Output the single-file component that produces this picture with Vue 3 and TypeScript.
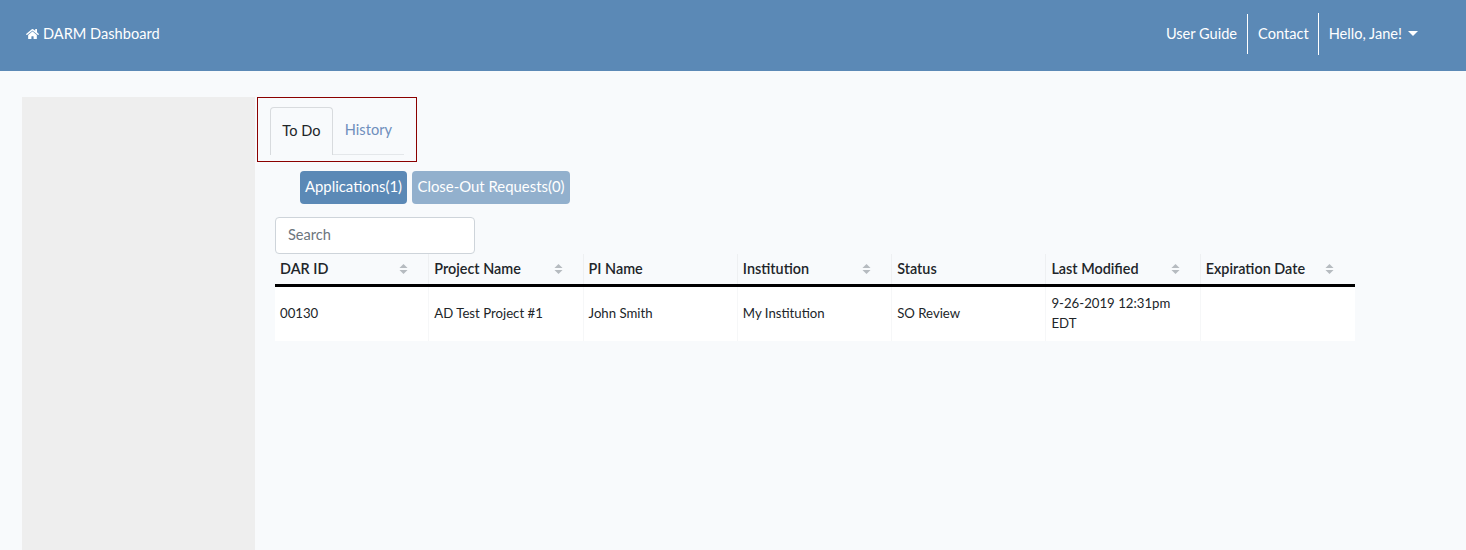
<script setup lang="ts">
const columns = ['DAR ID', 'Project Name', 'PI Name', 'Institution', 'Status', 'Last Modified', 'Expiration Date']
const sortable = [true, true, false, true, false, true, true]
const row = ['00130', 'AD Test Project #1', 'John Smith', 'My Institution', 'SO Review', '9-26-2019 12:31pm EDT', '']
</script>

<template>
  <div class="page">
    <header class="topbar">
      <a class="brand">
        <svg class="home" viewBox="0 0 576 512" aria-hidden="true">
          <path fill="currentColor" d="M280.4 148.3L96 300.1V464a16 16 0 0 0 16 16l112-.3a16 16 0 0 0 15.9-16V368a16 16 0 0 1 16-16h64a16 16 0 0 1 16 16v95.6a16 16 0 0 0 16 16.1l112 .3a16 16 0 0 0 16-16V300L295.7 148.3a12.2 12.2 0 0 0-15.3 0zM571.6 251.5L488 182.6V44a12 12 0 0 0-12-12h-56a12 12 0 0 0-12 12v72.6L318.5 43a48 48 0 0 0-61 0L4.3 251.5a12 12 0 0 0-1.6 16.9l25.5 31A12 12 0 0 0 45.2 301l235.2-193.7a12.2 12.2 0 0 1 15.3 0L530.9 301a12 12 0 0 0 16.9-1.6l25.5-31a12 12 0 0 0-1.7-16.9z"/>
        </svg>
        DARM Dashboard
      </a>
      <nav class="links">
        <a class="link first">User Guide</a>
        <a class="link second">Contact</a>
        <a class="link third">Hello, Jane! <span class="caret"></span></a>
      </nav>
    </header>

    <div class="content">
      <aside class="sidebar"></aside>
      <main class="main">
        <div class="tabs-box">
          <div class="tabs">
            <a class="tab active">To Do</a>
            <a class="tab">History</a>
          </div>
        </div>
        <div class="pills">
          <button class="pill on">Applications(1)</button>
          <button class="pill off">Close-Out Requests(0)</button>
        </div>
        <input class="search" type="text" placeholder="Search" />
        <div class="table">
          <div class="thead">
            <div v-for="(c, i) in columns" :key="c" class="th">
              <span>{{ c }}</span>
              <svg v-if="sortable[i]" class="sort" viewBox="0 0 10 12" aria-hidden="true">
                <path fill="currentColor" d="M5 0.5L9.5 5H0.5zM5 11.5L0.5 7H9.5z"/>
              </svg>
            </div>
          </div>
          <div class="tr">
            <div v-for="(v, i) in row" :key="i" class="td">{{ v }}</div>
          </div>
        </div>
      </main>
    </div>
  </div>
</template>

<style>
html, body { margin: 0; background: #f8fafc; }
</style>

<style scoped>
.page {
  height: 550px;
  overflow: hidden;
  background: #f8fafc;
  font-family: Lato, "Noto Sans", sans-serif;
  font-size: 14.6px;
  color: #212529;
}
.topbar {
  height: 71px;
  background: #5b89b6;
  color: #fff;
  display: flex;
  align-items: center;
  justify-content: space-between;
  padding: 0 48px 4px 26px;
  box-sizing: border-box;
}
.brand { display: flex; align-items: center; gap: 4px; }
.home { width: 13px; height: 12px; }
.links { display: flex; align-items: center; }
.link { display: flex; align-items: center; white-space: nowrap; padding: 0 10px; }
.first { height: 40px; border-right: 1px solid #fff; margin-top: 1px; padding-bottom: 2px; box-sizing: border-box; }
.second { height: 42px; border-right: 1px solid #fff; padding-right: 9px; }
.third { height: 42px; padding-right: 0; }
.caret {
  width: 0;
  height: 0;
  margin-left: 6px;
  border-left: 5px solid transparent;
  border-right: 5px solid transparent;
  border-top: 5px solid #fff;
}
.content { display: flex; padding: 26px 0 0 22px; }
.sidebar { width: 233px; height: 453px; background: #eee; }
.main { margin-left: 2px; width: 1098px; display: flex; flex-direction: column; align-items: flex-start; }
.tabs-box {
  width: 160px;
  height: 65px;
  box-sizing: border-box;
  border: 1px solid #8b0000;
  padding: 9px 12px 0 12px;
}
.tabs { display: flex; border-bottom: 1px solid #e4e7ea; height: 47px; }
.tab {
  display: flex;
  align-items: center;
  justify-content: center;
  color: #6f8fbc;
  padding: 0 12px 2px;
}
.tab.active {
  width: 63px;
  padding: 0 0 2px;
  box-sizing: border-box;
  color: #212529;
  border: 1px solid #d8dbde;
  border-bottom: 0;
  border-radius: 4px 4px 0 0;
  background: #f8fafc;
  height: 48px;
}
.pills { display: flex; gap: 5px; margin: 9px 0 0 43px; }
.pill {
  height: 33px;
  border: 0;
  border-radius: 4px;
  padding: 0 0 3px;
  font: inherit;
  font-size: 14.9px;
  color: #fff;
  white-space: nowrap;
}
.on { background: #5b89b6; width: 107px; }
.off { background: #92b0cd; width: 158px; }
.search {
  margin: 13px 0 0 18px;
  width: 200px;
  height: 37px;
  box-sizing: border-box;
  border: 1px solid #ced4da;
  border-radius: 4px;
  padding: 0 12px 2px;
  font: inherit;
  background: #fff;
  color: #495057;
}
.search::placeholder { color: #6c757d; opacity: 1; }
.table { margin-left: 18px; width: 1080px; }
.thead { display: grid; grid-template-columns: repeat(7, 1fr); height: 30px; border-bottom: 3px solid #000; }
.th {
  display: flex;
  align-items: center;
  justify-content: space-between;
  padding: 0 20px 1px 5px;
  font-size: 14.4px;
  font-weight: 600;
  border-right: 1px solid #eef0f2;
  white-space: nowrap;
  box-sizing: border-box;
}
.th:last-child { border-right: 0; padding-right: 21px; }
.sort { width: 9px; height: 12px; color: #b6bbc0; }
.tr { display: grid; grid-template-columns: repeat(7, 1fr); height: 54px; background: #fff; }
.td {
  min-width: 0;
  display: flex;
  align-items: center;
  padding: 0 15px 2px 5px;
  line-height: 20px;
  font-size: 13.2px;
  border-right: 1px solid #f6f7f8;
  box-sizing: border-box;
}
.td:last-child { border-right: 0; }
</style>
